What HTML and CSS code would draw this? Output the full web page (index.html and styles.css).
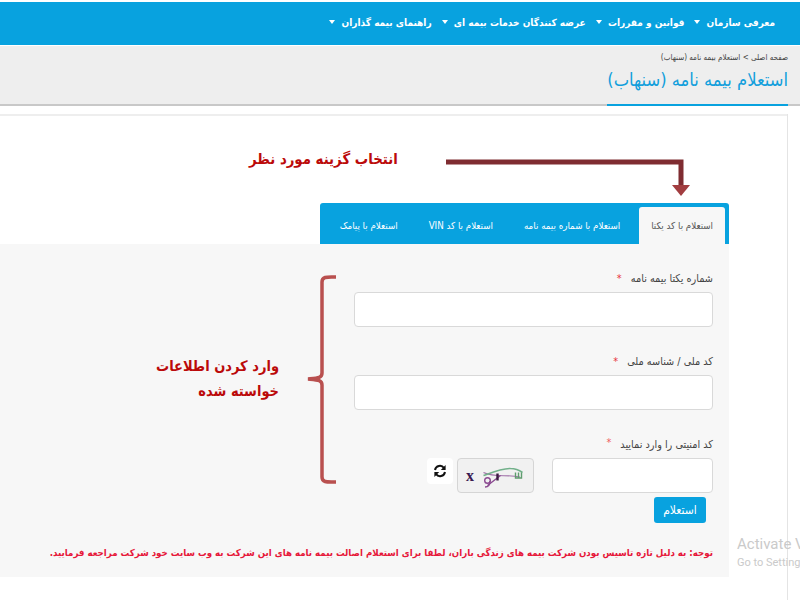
FILE: index.html
```html
<!DOCTYPE html>
<html lang="fa" dir="rtl">
<head>
<meta charset="utf-8">
<title>استعلام بیمه نامه (سنهاب)</title>
<link rel="stylesheet" href="styles.css">
</head>
<body>
<nav class="nav">
  <a class="nav-item">معرفی سازمان <i class="caret"></i></a>
  <a class="nav-item">قوانین و مقررات <i class="caret"></i></a>
  <a class="nav-item">عرضه کنندگان خدمات بیمه ای <i class="caret"></i></a>
  <a class="nav-item">راهنمای بیمه گذاران <i class="caret"></i></a>
</nav>
<header class="band">
  <div class="band-inner">
    <div class="crumbs">صفحه اصلی &gt; استعلام بیمه نامه (سنهاب)</div>
    <h1 class="title">استعلام بیمه نامه (سنهاب)</h1>
  </div>
</header>
<main class="content">
  <div class="tabs">
    <a class="tab tab-active">استعلام با کد یکتا</a>
    <a class="tab">استعلام با شماره بیمه نامه</a>
    <a class="tab">استعلام با کد VIN</a>
    <a class="tab">استعلام با پیامک</a>
  </div>
  <section class="panel">
    <form class="form">
      <label class="label">شماره یکتا بیمه نامه <span class="req">*</span></label>
      <input class="input" type="text">
      <label class="label label-gap">کد ملی / شناسه ملی <span class="req">*</span></label>
      <input class="input" type="text">
      <label class="label label-gap2">کد امنیتی را وارد نمایید <span class="req req-up">*</span></label>
      <div class="captcha-row">
        <input class="input input-short" type="text">
        <div class="captcha">
          <svg width="74" height="32" viewBox="0 0 74 32">
            <text class="cap-x" x="8" y="21" dx="7">x</text>
            <path d="M24.5 12.5 C36 18 48 14 61 17" fill="none" stroke="#a070a8" stroke-width="1.1"/>
            <path d="M24.5 15.5 C34 12 44 8 51.5 8.5 C56 8.5 60 10 63.5 12.5" fill="none" stroke="#72b08a" stroke-width="1.6"/>
            <path d="M28.5 25.5 C33 22 37 19 41.5 15.5" fill="none" stroke="#8a4a90" stroke-width="1.4"/>
            <circle cx="28.5" cy="20.5" r="2.8" fill="none" stroke="#8a4a90" stroke-width="1.4"/>
            <path d="M26 27 C29 27 31 25 31 21" fill="none" stroke="#8a4a90" stroke-width="1.4"/>
            <path d="M38.5 13.5 V20.5" stroke="#3a1a40" stroke-width="2.4"/>
            <path d="M56.5 12.5 V18 H62.5 V12.5 M59.5 12.5 V18" fill="none" stroke="#5f9c6e" stroke-width="1.4"/>
          </svg>
        </div>
        <button class="refresh" type="button" aria-label="refresh">
          <svg width="14" height="14" viewBox="0 0 14 14">
            <path d="M2 6 A5 5 0 0 1 11 4" fill="none" stroke="#111" stroke-width="2"/>
            <path d="M12.6 1 V6 H7.8 Z" fill="#111"/>
            <path d="M12 8 A5 5 0 0 1 3 10" fill="none" stroke="#111" stroke-width="2"/>
            <path d="M1.4 13 V8 H6.2 Z" fill="#111"/>
          </svg>
        </button>
      </div>
      <div class="actions"><button class="submit" type="button">استعلام</button></div>
    </form>
    <p class="note">توجه: به دلیل تازه تاسیس بودن شرکت بیمه های زندگی باران، لطفا برای استعلام اصالت بیمه نامه های این شرکت به وب سایت خود شرکت مراجعه فرمایید.</p>
  </section>

  <div class="ann ann-top">انتخاب گزینه مورد نظر</div>
  <svg class="ann-arrow" width="250" height="42" viewBox="0 0 250 42">
    <path d="M1 3 H236 V28" fill="none" stroke="#7f2c31" stroke-width="5"/>
    <path d="M227 26 H245 L236 37 Z" fill="#a23d40"/>
  </svg>
  <div class="ann ann-side">وارد کردن اطلاعات<br>خواسته شده</div>
  <svg class="ann-brace" width="32" height="210" viewBox="0 0 32 210">
    <path d="M30 2 C22 2 16 1 16 7 V98 C16 103 12 103 2 104 C12 105 16 105 16 110 V202 C16 208 22 207 30 207" fill="none" stroke="#b9504f" stroke-width="3.5"/>
  </svg>
</main>
<div class="watermark">
  <div class="wm-title">Activate V</div>
  <div class="wm-sub">Go to Setting</div>
</div>
</body>
</html>
```
FILE: styles.css
```css
* { box-sizing: border-box; }
html, body { margin: 0; padding: 0; }
body {
  width: 800px;
  height: 600px;
  overflow: hidden;
  position: relative;
  background: #fff;
  font-family: "DejaVu Sans Condensed", "DejaVu Sans", sans-serif;
  color: #333;
}
.nav {
  margin-top: 2px;
  height: 43px;
  background: #08a2df;
  display: flex;
  align-items: center;
  gap: 10px;
  padding: 0 25px 2px 0;
}
.nav-item {
  color: #fff;
  font-size: 10px;
  font-weight: bold;
  white-space: nowrap;
}
.caret {
  display: inline-block;
  width: 0;
  height: 0;
  margin-right: 3px;
  vertical-align: 2px;
  border-left: 3.5px solid transparent;
  border-right: 3.5px solid transparent;
  border-top: 4px solid #fff;
}
.band {
  height: 60px;
  margin-top: 1px;
  background: #eeeeee;
  border-bottom: 2px solid #c8c8c8;
  padding: 6px 12px 0 0;
  display: flex;
}
.band-inner {
  border-bottom: 2px solid #08a2df;
  height: 54px;
}
.crumbs {
  font-size: 8px;
  color: #444;
  line-height: 12px;
}
.title {
  margin: 2px 0 0;
  font-size: 18.2px;
  font-weight: normal;
  line-height: 28px;
  color: #129fdc;
  white-space: nowrap;
}
.content {
  position: relative;
  height: 494px;
  padding-top: 97px;
}
.content::before {
  content: "";
  position: absolute;
  top: 8px;
  left: 0;
  right: 12px;
  height: 2px;
  background: #eeeeee;
}
.content::after {
  content: "";
  position: absolute;
  top: 8px;
  right: 12px;
  width: 1px;
  height: 486px;
  background: #e4e4e4;
}
.tabs {
  width: 409px;
  height: 41px;
  margin-right: 71px;
  padding: 4px 4px 0 0;
  background: #08a2df;
  border-radius: 3px 3px 0 0;
  display: flex;
  align-items: stretch;
}
.tab {
  color: #fff;
  font-size: 9.7px;
  white-space: nowrap;
  padding: 0 12px;
  margin-left: 7px;
  display: flex;
  align-items: center;
}
.tab-active {
  background: #f7f7f7;
  color: #555;
  border-radius: 3px 3px 0 0;
}
.panel {
  width: 729px;
  margin-right: 71px;
  height: 333px;
  background: #f7f7f7;
  padding: 28px 16px 0 0;
}
.form {
  width: 359px;
  display: flex;
  flex-direction: column;
}
.label {
  font-size: 10.8px;
  line-height: 14px;
  color: #444;
  height: 20px;
}
.label-gap { margin-top: 28px; }
.label-gap2 { margin-top: 28px; }
.req { color: #e8323c; margin-right: 6px; }
.req-up { position: relative; top: -2px; color: #ef5a60; }
.input {
  width: 359px;
  height: 35px;
  background: #fff;
  border: 1.5px solid #d9d9d9;
  border-radius: 4px;
  display: block;
}
.captcha-row {
  display: flex;
  align-items: flex-start;
}
.input-short { width: 161px; }
.captcha {
  width: 77px;
  height: 35px;
  margin-right: 18px;
  background: #f1f1f1;
  border: 1.5px solid #d5d5d5;
  border-radius: 4px;
  display: flex;
  align-items: center;
  justify-content: center;
}
.cap-x {
  font-family: "Liberation Serif", serif;
  font-weight: bold;
  font-size: 16px;
  fill: #3a1a50;
}
.refresh {
  width: 26px;
  height: 26px;
  margin-right: 4px;
  padding: 0;
  background: #fff;
  border: 0;
  border-radius: 4px;
  display: flex;
  align-items: center;
  justify-content: center;
}
.actions {
  margin-top: 4px;
  padding-right: 7px;
}
.submit {
  display: block;
  width: 52px;
  height: 26px;
  padding: 0;
  background: #08a2df;
  color: #fff;
  border: 0;
  border-radius: 3px;
  font-family: "DejaVu Sans Condensed", "DejaVu Sans", sans-serif;
  font-size: 12px;
}
.note {
  margin: 22px 0 0;
  font-size: 9.65px;
  line-height: 16px;
  color: #e6183a;
  white-space: nowrap;
  font-weight: bold;
}
.ann {
  position: absolute;
  color: #bb0a0a;
  font-weight: bold;
  white-space: nowrap;
}
.ann-top {
  top: 41px;
  left: 249px;
  font-size: 14.8px;
  line-height: 24px;
}
.ann-arrow {
  position: absolute;
  top: 53px;
  left: 445px;
}
.ann-side {
  top: 248px;
  left: 155px;
  width: 124px;
  font-size: 14.5px;
  line-height: 25px;
  text-align: right;
}
.ann-brace {
  position: absolute;
  top: 169px;
  left: 306px;
}
.watermark {
  position: absolute;
  top: 534px;
  left: 737px;
  direction: ltr;
  text-align: left;
  white-space: nowrap;
  font-family: Roboto, sans-serif;
  color: #cacaca;
}
.wm-title { font-size: 15px; line-height: 20px; }
.wm-sub { font-size: 11px; line-height: 15px; margin-top: 1px; }
```
